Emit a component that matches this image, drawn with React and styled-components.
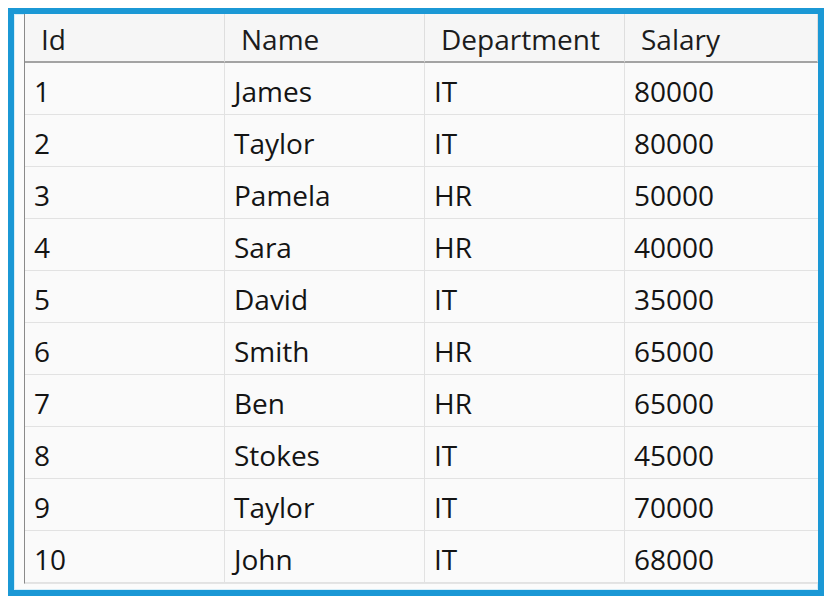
import React from "react";
import styled, { createGlobalStyle } from "styled-components";

const GlobalStyle = createGlobalStyle`
  html, body {
    margin: 0;
    padding: 0;
    background: #ffffff;
  }
  body {
    font-family: "Open Sans", "Noto Sans", sans-serif;
  }
`;

const Page = styled.div`
  padding: 8px;
`;

const Frame = styled.div`
  box-sizing: border-box;
  width: 816px;
  height: 588px;
  border: 6px solid #1b98d5;
  background: #fbfbfb;
  padding: 0 0 7px 10px;
  box-shadow: inset 0 0 0 1px #d6eef8;
`;

const Grid = styled.div`
  display: grid;
  grid-template-columns: 200px 200px 200px 1fr;
  grid-template-rows: 49px repeat(10, 52px);
  border-left: 1px solid #8a8a8a;
  border-bottom: 1px solid #e4e4e4;
`;

const HeadCell = styled.div`
  display: flex;
  align-items: center;
  padding: 3px 0 0 16px;
  background: #f6f6f6;
  border-right: 1px solid #dedede;
  border-bottom: 2px solid #a3a3a3;
  color: #1c1c1c;
  font-size: 28px;
  &:last-child {
    border-right: none;
  }
`;

const Cell = styled.div`
  display: flex;
  align-items: center;
  padding: 4px 0 0 ${(props) => (props.$first ? "9px" : "9px")};
  background: #fafafa;
  border-right: ${(props) => (props.$last ? "none" : "1px solid #e2e2e2")};
  border-bottom: 1px solid #e2e2e2;
  color: #141414;
  font-size: 28px;
`;

const columns = ["Id", "Name", "Department", "Salary"];

const employees = [
  [1, "James", "IT", 80000],
  [2, "Taylor", "IT", 80000],
  [3, "Pamela", "HR", 50000],
  [4, "Sara", "HR", 40000],
  [5, "David", "IT", 35000],
  [6, "Smith", "HR", 65000],
  [7, "Ben", "HR", 65000],
  [8, "Stokes", "IT", 45000],
  [9, "Taylor", "IT", 70000],
  [10, "John", "IT", 68000],
];

const App = () => {
  return (
    <>
      <GlobalStyle />
      <Page>
        <Frame>
          <Grid>
            {columns.map((col) => (
              <HeadCell key={col}>{col}</HeadCell>
            ))}
            {employees.map((row) =>
              row.map((value, i) => (
                <Cell key={`${row[0]}-${i}`} $first={i === 0} $last={i === 3}>
                  {value}
                </Cell>
              ))
            )}
          </Grid>
        </Frame>
      </Page>
    </>
  );
};

export default App;
